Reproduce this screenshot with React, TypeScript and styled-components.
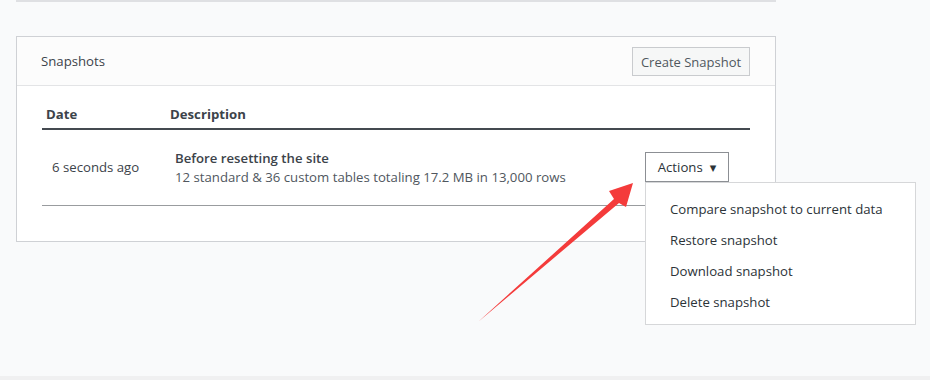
import React from "react";
import styled, { createGlobalStyle } from "styled-components";

const Global = createGlobalStyle`
  html, body { margin: 0; padding: 0; }
  body {
    background: #f9fafb;
    font-family: "Open Sans", "Noto Sans", "Liberation Sans", sans-serif;
    font-size: 13.2px;
    color: #3c434a;
  }
  #root { height: 380px; }
`;

const Page = styled.div`
  position: relative;
  height: 380px;
  display: flex;
  flex-direction: column;
  overflow: hidden;
`;

const PrevCard = styled.div`
  margin-left: 16px;
  width: 760px;
  height: 0;
  border-bottom: 2px solid #dfe0e3;
`;

const Card = styled.section`
  margin: 34px 0 0 16px;
  width: 758px;
  background: #fff;
  border: 1px solid #cfd1d5;
`;

const CardHeader = styled.header`
  height: 48px;
  padding: 0 25px 0 24px;
  display: flex;
  align-items: center;
  justify-content: space-between;
  background: #fcfcfc;
  border-bottom: 1px solid #e3e4e6;
`;

const Title = styled.h2`
  margin: 0;
  font-size: 13.2px;
  font-weight: 400;
  color: #3c434a;
`;

const Button = styled.button`
  font-family: inherit;
  font-size: 13px;
  color: #50575e;
  background: #f6f7f7;
  border: 1px solid #c9cbce;
  border-radius: 0;
  height: 29px;
  width: 118px;
  padding: 0;
  margin-top: 1px;
  cursor: pointer;
`;

const CardBody = styled.div`
  padding: 0 25px 35px 25px;
`;

const Table = styled.div`
  display: grid;
  grid-template-columns: 124px 1fr 105px;
`;

const HeadCell = styled.div`
  padding: 19px 0 5px 4px;
  font-weight: 700;
  font-size: 13.2px;
  color: #3c434a;
  border-bottom: 2px solid #444a50;
  line-height: 18px;
`;

const Row = styled.div`
  display: contents;
`;

const Cell = styled.div<{ $pad?: number }>`
  height: 75px;
  display: flex;
  flex-direction: column;
  justify-content: center;
  padding-left: ${(p) => p.$pad ?? 0}px;
  border-bottom: 1px solid #999c9f;
  position: relative;
  line-height: 19px;
  font-size: 13.2px;
`;

const DateText = styled.div`
  margin-top: 0;
`;

const DescTitle = styled.div`
  font-weight: 600;
  color: #3c434a;
`;

const DescSub = styled.div`
  color: #50575e;
`;

const ActionsButton = styled.button`
  font-family: inherit;
  font-size: 13.2px;
  color: #2c3338;
  background: #fff;
  border: 1px solid #8c8f94;
  border-radius: 0;
  width: 84px;
  height: 30px;
  padding: 0;
  display: flex;
  align-items: center;
  justify-content: center;
  gap: 7px;
  margin-top: -1px;
`;

const Caret = styled.span`
  font-size: 8.5px;
  color: #2c3338;
  font-family: "DejaVu Sans", sans-serif;
  margin-top: 1px;
`;

const Menu = styled.ul`
  position: absolute;
  left: 0;
  top: 52px;
  width: 269px;
  margin: 0;
  padding: 11px 0 6px 0;
  list-style: none;
  background: #fff;
  border: 1px solid #d6d7d9;
  z-index: 2;
`;

const MenuItem = styled.li`
  padding: 0 0 0 24px;
  height: 31px;
  line-height: 31px;
  font-size: 13.2px;
  color: #2c3338;
  white-space: nowrap;
`;

const BottomBand = styled.div`
  margin-top: auto;
  height: 4px;
  background: #f0f0f1;
`;

const Arrow = styled.svg`
  position: absolute;
  left: 0;
  top: 0;
  pointer-events: none;
  z-index: 3;
`;

export default function App() {
  return (
    <>
      <Global />
      <Page>
        <PrevCard />
        <Card>
          <CardHeader>
            <Title>Snapshots</Title>
            <Button>Create Snapshot</Button>
          </CardHeader>
          <CardBody>
            <Table>
              <HeadCell>Date</HeadCell>
              <HeadCell>Description</HeadCell>
              <HeadCell />
              <Row>
                <Cell $pad={10}>
                  <DateText>6 seconds ago</DateText>
                </Cell>
                <Cell $pad={9}>
                  <DescTitle>Before resetting the site</DescTitle>
                  <DescSub>12 standard &amp; 36 custom tables totaling 17.2 MB in 13,000 rows</DescSub>
                </Cell>
                <Cell>
                  <ActionsButton>
                    Actions <Caret>▼</Caret>
                  </ActionsButton>
                  <Menu>
                    <MenuItem>Compare snapshot to current data</MenuItem>
                    <MenuItem>Restore snapshot</MenuItem>
                    <MenuItem>Download snapshot</MenuItem>
                    <MenuItem>Delete snapshot</MenuItem>
                  </Menu>
                </Cell>
              </Row>
            </Table>
          </CardBody>
        </Card>
        <BottomBand />
        <Arrow width="930" height="380" viewBox="0 0 930 380">
          <polygon
            points="478,322 614,199 609,191 633,183 626,207 619,203"
            fill="#f43b3b"
          />
        </Arrow>
      </Page>
    </>
  );
}
